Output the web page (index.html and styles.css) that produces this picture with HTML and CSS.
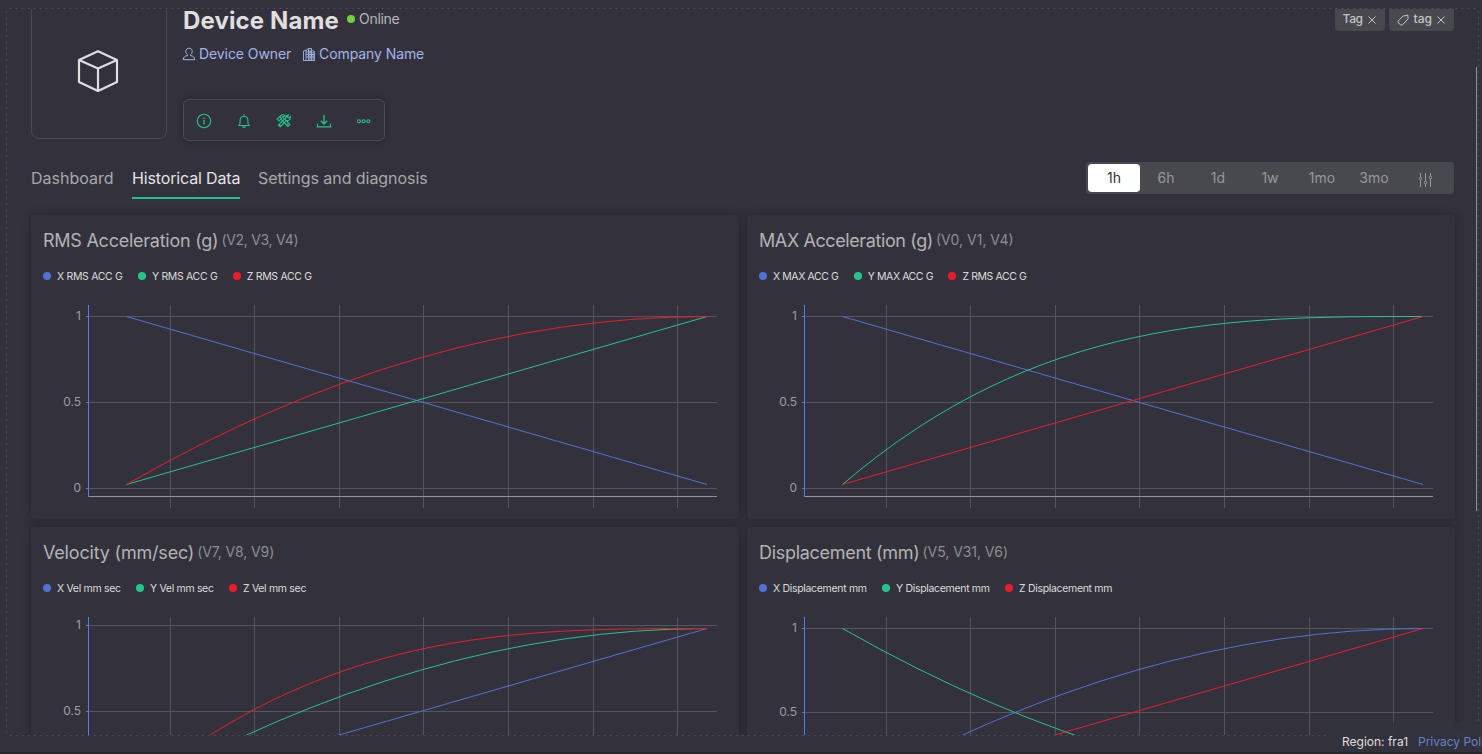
FILE: index.html
```html
<!DOCTYPE html>
<html lang="en">
<head>
<meta charset="utf-8">
<title>Device Name</title>
<link rel="stylesheet" href="styles.css">
</head>
<body>
<svg class="defs" width="0" height="0" aria-hidden="true">
  <defs>
    <g id="grid">
      <path class="grid" d="M139.5 90V293M223.5 90V293M308.5 90V293M392.5 90V293M477.5 90V293M562.5 90V293M646.5 90V293"/>
      <path class="base" d="M57 281.5H686"/>
      <path class="axis" d="M57.5 90V282"/>
    </g>
  </defs>
</svg>
<main class="frame">
  <header class="device">
    <div class="thumb">
      <svg width="44" height="44" viewBox="0 0 44 44"><path d="M22 2.2 41 11v22L22 42 3 33V11ZM3 11l19 8.5L41 11M22 19.5V42"/></svg>
    </div>
    <div class="info">
      <div class="title-row"><h1>Device Name</h1><i class="dot online-dot"></i><span class="status">Online</span></div>
      <div class="owner-row">
        <svg width="14" height="14" viewBox="0 0 14 14"><path d="M7 1.200c2 0 3.200 1.400 3.200 3.200C10.200 6 9.500 7 8.500 7.700v1c2.600.2 4 1.300 4.300 4H1.200c.3-2.700 1.700-3.800 4.300-4v-1C4.500 7 3.800 6 3.800 4.400 3.800 2.600 5 1.200 7 1.200Z"/></svg>
        <span class="owner">Device Owner</span>
        <svg class="building" width="14" height="14" viewBox="0 0 14 14"><path d="M1 13.500h12M1.500 13V4L4 3V13M4 3.500 6.500 1.500 9.500 1.500V13M9.500 3.500l3 1V13M6.500 1.500V13M8 3v10M11 5v8M4 5h5.500M4 7.500h8M4 10h8"/></svg>
        <span class="company">Company Name</span>
      </div>
      <div class="toolbar">
        <svg viewBox="0 0 16 16"><circle cx="8" cy="8" r="6.700"/><path class="heavy" d="M8 6.800v4.700M8 4.300v1.400"/></svg>
        <svg viewBox="0 0 16 16"><path d="M8 1v1.500M2 12.500h12M3.300 12.300C4.500 10.500 4 8.300 4.200 6.500a3.850 3.850 0 0 1 7.600 0C12 8.300 11.500 10.500 12.700 12.300M7 13v1.300h2V13"/></svg>
        <svg viewBox="0 0 16 16"><path d="M1.300 6.200 5 2.500c1.500-1 3-.8 4 .2L6.500 4l7.300 7.500-2 2L4.800 6.200 3 8ZM9.800 6.500C9 4.500 10 2.300 12.500 2l-1.200 2 1.200 1L14.300 3.500c.5 3-1.500 4.700-3.800 4L4.300 13.700 2.500 12 8 6.500M4 4l2 2M3 12l2 1M10 12l2-1"/></svg>
        <svg viewBox="0 0 16 16"><path class="heavy" d="M8 2v9M4.800 7.800 8 11l3.200-3.200M1.500 10.800v3h13v-3"/></svg>
        <svg viewBox="0 0 16 16"><circle cx="3" cy="8.300" r="1.500"/><circle cx="7.700" cy="8.300" r="1.500"/><circle cx="12.400" cy="8.300" r="1.500"/></svg>
      </div>
    </div>
    <div class="tags">
      <span class="tag"><b class="t1">Tag</b><svg class="x" width="8" height="8" viewBox="0 0 8 8"><path d="m.5.5 7 7M7.500.5l-7 7"/></svg></span>
      <span class="tag"><svg class="label" width="12" height="12" viewBox="0 0 12 12"><path d="m1 7.200 4.800-5L10.800 1l.3 3.800L5.500 10.800 3.800 11 1 8.500ZM8.900 3.200h.3"/></svg><b class="t2">tag</b><svg class="x" width="8" height="8" viewBox="0 0 8 8"><path d="m.5.5 7 7M7.500.5l-7 7"/></svg></span>
    </div>
  </header>
  <div class="nav">
    <nav class="tabs"><a class="tab1">Dashboard</a><a class="tab2 active">Historical Data</a><a class="tab3">Settings and diagnosis</a></nav>
    <div class="ranges"><span class="on">1h</span><span>6h</span><span>1d</span><span>1w</span><span>1mo</span><span>3mo</span><span><svg width="14" height="16" viewBox="0 0 14 16"><path d="M2.500 1v4M2.500 8v7M7.500 1v8M7.500 12v3M12.500 1v3M12.500 7v8"/><circle cx="2.500" cy="6.500" r="1.300"/><circle cx="7.500" cy="10.500" r="1.300"/><circle cx="12.500" cy="5.500" r="1.300"/></svg></span></div>
  </div>
  <section class="cards">
    <article class="card c1">
      <h2><span>RMS Acceleration (g)</span><small>(V2, V3, V4)</small></h2>
      <div class="legend"><i class="dot blue"></i><span>X RMS ACC G</span><i class="dot green"></i><span>Y RMS ACC G</span><i class="dot red"></i><span>Z RMS ACC G</span></div>
      <svg class="chart" viewBox="0 80 708 224"><path class="grid" d="M57 101.500H686M57 187.500H686M57 273.500H686"/><use href="#grid"/><path class="axis" d="M55 101.500h2M55 187.500h2M55 273.500h2"/>
        <text x="50" y="105">1</text><text x="50" y="191">0.5</text><text x="50" y="277">0</text>
        <path class="line l-blue" d="M95.500 101.500 676 269.500"/><path class="line l-green" d="M95.500 269.500 676 101.500"/><path class="line l-red" d="M95.500 269.500Q388 101.500 676 101.500"/></svg>
    </article>
    <article class="card c2">
      <h2><span>MAX Acceleration (g)</span><small>(V0, V1, V4)</small></h2>
      <div class="legend"><i class="dot blue"></i><span>X MAX ACC G</span><i class="dot green"></i><span>Y MAX ACC G</span><i class="dot red"></i><span>Z RMS ACC G</span></div>
      <svg class="chart" viewBox="0 80 708 224"><path class="grid" d="M57 101.500H686M57 187.500H686M57 273.500H686"/><use href="#grid"/><path class="axis" d="M55 101.500h2M55 187.500h2M55 273.500h2"/>
        <text x="50" y="105">1</text><text x="50" y="191">0.5</text><text x="50" y="277">0</text>
        <path class="line l-blue" d="M95.500 101.500 676 269.500"/><path class="line l-green" d="M95.500 269.500C291.500 101.500 485 101.500 676 101.500"/><path class="line l-red" d="M95.500 269.500 676 101.500"/></svg>
    </article>
    <article class="card c3">
      <h2><span>Velocity (mm/sec)</span><small>(V7, V8, V9)</small></h2>
      <div class="legend"><i class="dot blue"></i><span>X Vel mm sec</span><i class="dot green"></i><span>Y Vel mm sec</span><i class="dot red"></i><span>Z Vel mm sec</span></div>
      <svg class="chart" viewBox="0 80 708 224"><path class="grid" d="M57 98.500H686M57 184.500H686M57 270.500H686"/><use href="#grid"/><path class="axis" d="M55 98.500h2M55 184.500h2M55 270.500h2"/>
        <text x="50" y="102">1</text><text x="50" y="188">0.5</text>
        <path class="line l-blue" d="M95.500 269.500 676 101.500"/><path class="line l-green" d="M95.500 269.500Q391 101.500 676 101.500"/><path class="line l-red" d="M95.500 269.500C294.500 101.500 485 101.500 676 101.500"/></svg>
    </article>
    <article class="card c4">
      <h2><span>Displacement (mm)</span><small>(V5, V31, V6)</small></h2>
      <div class="legend"><i class="dot blue"></i><span>X Displacement mm</span><i class="dot green"></i><span>Y Displacement mm</span><i class="dot red"></i><span>Z Displacement mm</span></div>
      <svg class="chart" viewBox="0 80 708 224"><path class="grid" d="M57 101.500H686M57 185.500H686M57 269.500H686"/><use href="#grid"/><path class="axis" d="M55 101.500h2M55 185.500h2M55 269.500h2"/>
        <text x="50" y="105">1</text><text x="50" y="189">0.5</text>
        <path class="line l-blue" d="M95.500 269.500Q391 101.500 676 101.500"/><path class="line l-green" d="M95.500 101.500Q391 269.500 676 269.500"/><path class="line l-red" d="M95.500 269.500 676 101.500"/></svg>
    </article>
  </section>
</main>
<svg class="outline" width="1473" height="728"><rect x=".5" y=".5" width="1472" height="727" rx="3"/></svg>
<div class="scrollbar"></div>
<footer><span class="region">Region: fra1</span><a>Privacy Policy</a></footer>
</body>
</html>
```
FILE: styles.css
```css
* { box-sizing: border-box; }
body { margin: 0; width: 1482px; height: 754px; overflow: hidden; position: relative; background: #33323c; color: #e0dede; font-family: Inter, "Liberation Sans", sans-serif; border-bottom: 2px solid #262629; padding: 9px 3px 0 7px; }
svg { fill: none; stroke: currentColor; flex: none; }
.defs { position: absolute; }
.frame { height: 726px; overflow: hidden; padding: 0 24px; }
.outline { position: absolute; left: 6px; top: 8px; stroke: #4d4d56; stroke-dasharray: 2 4; pointer-events: none; }
.device { display: flex; margin-top: -6px; height: 136px; }
.thumb { width: 136px; height: 136px; border: 1px solid #4a4a52; border-radius: 8px; display: flex; align-items: center; justify-content: center; margin-right: 16px; color: #e0dede; }
.thumb svg { stroke-width: 2.2; stroke-linejoin: round; margin-left: -3px; }
.info { width: 400px; white-space: nowrap; }
.title-row { display: flex; align-items: center; height: 32px; }
h1 { margin: 0; padding-top: 3px; font-size: 24px; line-height: 32px; font-weight: 700; width: 164px; letter-spacing: .12px; }
.dot { display: block; width: 8px; height: 8px; border-radius: 50%; flex: none; }
.online-dot { background: #73d13d; }
.status { font-size: 14px; margin: -2px 0 0 4px; color: #b7b7ba; letter-spacing: -.3px; }
.owner-row { display: flex; align-items: center; height: 20px; margin-top: 8px; color: #a6b4ec; font-size: 14px; }
.owner-row svg { margin: 2px 2px 0 -1px; }
.owner { width: 104px; margin-left: 1px; letter-spacing: -.08px; }
.company { letter-spacing: -.08px; }
.owner-row .building { margin-right: 3px; stroke-width: .9; }
.toolbar { margin-top: 36px; width: 202px; height: 42px; border: 1px solid #4a4a52; border-radius: 6px; box-shadow: 0 0 8px rgba(0,0,0,.25); display: flex; align-items: center; gap: 24px; padding: 2px 0 0 12px; color: #22c38b; }
.toolbar svg { width: 16px; height: 16px; stroke-width: 1.1; }
.heavy { stroke-width: 1.3; }
.tags { margin-left: auto; margin-right: 1px; display: flex; gap: 4px; padding-top: 3px; }
.tag { height: 25px; display: flex; align-items: center; background: #48484f; border-radius: 4px; padding: 0 8px; font-size: 12px; color: #c5c4c5; }
.tag b { font-weight: 500; }
.tag .x { margin: 3px 1px 0 5px; }
.tag .label { margin: 2px 5px 0 0; }
.t1 { width: 20px; letter-spacing: -.4px; }
.nav { display: flex; justify-content: space-between; margin-top: 23px; height: 37px; }
.tabs { display: flex; gap: 18px; font-size: 16px; line-height: 32px; color: #a8a8ab; white-space: nowrap; }
.tab1 { width: 83px; }
.tab2 { width: 108px; letter-spacing: -.15px; }
.tab3 { letter-spacing: -.05px; }
.tabs .active { color: #e5e4e4; border-bottom: 2px solid #22c38b; }
.ranges { display: flex; height: 32px; padding: 2px; background: #48484f; border-radius: 4px; margin-right: 1px; color: #98989c; font-size: 14px; }
.ranges span { width: 52px; display: flex; align-items: center; justify-content: center; padding-bottom: 2px; }
.ranges svg { margin: 5px 2px 0 0; }
.ranges .on { background: #fff; color: #32323b; border-radius: 4px; }
.cards { display: grid; grid-template-columns: 708px 708px; gap: 8px; margin-top: 16px; }
.card { height: 304px; background: #33323c; border-radius: 4px; box-shadow: 0 0 10px rgba(0,0,0,.28); white-space: nowrap; }
h2 { display: flex; margin: 0; padding: 14px 0 0 12px; font-size: 18px; line-height: 24px; height: 38px; font-weight: 400; color: #b3b2b4; letter-spacing: -.25px; }
small { font-size: 14px; line-height: 22px; margin-left: 3px; color: #8d8d91; letter-spacing: -.3px; }
.c2 h2 { letter-spacing: -.4px; }
.c2 small { letter-spacing: 0; }
.c3 h2 { letter-spacing: -.19px; }
.c3 small { letter-spacing: -.12px; }
.c4 h2 { letter-spacing: -.3px; }
.c4 small { letter-spacing: -.05px; }
.legend { display: flex; align-items: center; height: 14px; margin: 16px 0 12px 12px; font-size: 10.500px; color: #dddcdc; letter-spacing: -.32px; }
.legend span { margin: 0 15.400px 0 6px; }
.c2 .legend { letter-spacing: -.42px; }
.blue { background: #5470d6; }
.green { background: #26c48c; }
.red { background: #e91e2a; }
.chart { display: block; width: 708px; height: 224px; }
.grid { stroke: #55555d; }
.base { stroke: #929296; }
.axis { stroke: #5878f0; }
.line { stroke-width: 1; }
.l-blue { stroke: #5470d6; }
.l-green { stroke: #26c48c; }
.l-red { stroke: #e91e2a; }
.chart text { fill: #9c9ca0; stroke: none; font-size: 12px; text-anchor: end; }
.scrollbar { position: absolute; left: 1476px; top: 67px; width: 1px; height: 444px; background: #929294; }
footer { position: absolute; left: 1326px; top: 722px; width: 156px; height: 32px; padding: 12px 0 0 16px; background: rgba(51,50,60,.85); display: flex; gap: 8px; font-size: 12px; line-height: 16px; white-space: nowrap; overflow: hidden; }
.region { flex: none; width: 68px; }
footer a { color: #6c80c8; }
```
